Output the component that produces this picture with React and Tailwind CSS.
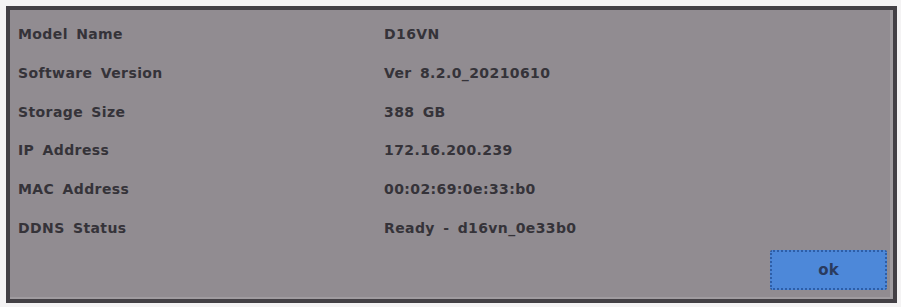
export default function App() {
  const rows = [
    ["Model Name", "D16VN"],
    ["Software Version", "Ver 8.2.0_20210610"],
    ["Storage Size", "388 GB"],
    ["IP Address", "172.16.200.239"],
    ["MAC Address", "00:02:69:0e:33:b0"],
    ["DDNS Status", "Ready - d16vn_0e33b0"],
  ];
  return (
    <div className="w-[901px] h-[307px] bg-[#f4f3f4] pt-[6px] pl-[6px]">
      <div className="w-[891px] h-[297px] border-[4px] border-[#434045] bg-[#918c91] flex flex-col">
        <div className="flex-1 flex flex-col border-r-[3px] border-b-[2px] border-[#a09ca0] pl-[8px] pr-[3px]">
          <div
            className="flex flex-col gap-[18.8px] pt-[14px] text-[#353339] text-[14px] leading-[20px] font-bold tracking-[0.4px]"
            style={{ fontFamily: '"DejaVu Sans", Verdana, sans-serif', wordSpacing: "3px" }}
          >
            {rows.map(([k, v]) => (
              <div key={k} className="flex h-[20px] items-start">
                <div className="w-[366px]">{k}</div>
                <div>{v}</div>
              </div>
            ))}
          </div>
          <div className="flex-1 flex justify-end items-end pb-[7px]">
            <button
              className="w-[117px] h-[40px] bg-[#4d88d9] border-[2px] border-dotted border-[#2d5ea8] rounded-[2px] text-[#2a3b5e] text-[15px] font-bold"
              style={{ fontFamily: '"DejaVu Sans", Verdana, sans-serif' }}
            >
              ok
            </button>
          </div>
        </div>
      </div>
    </div>
  );
}
